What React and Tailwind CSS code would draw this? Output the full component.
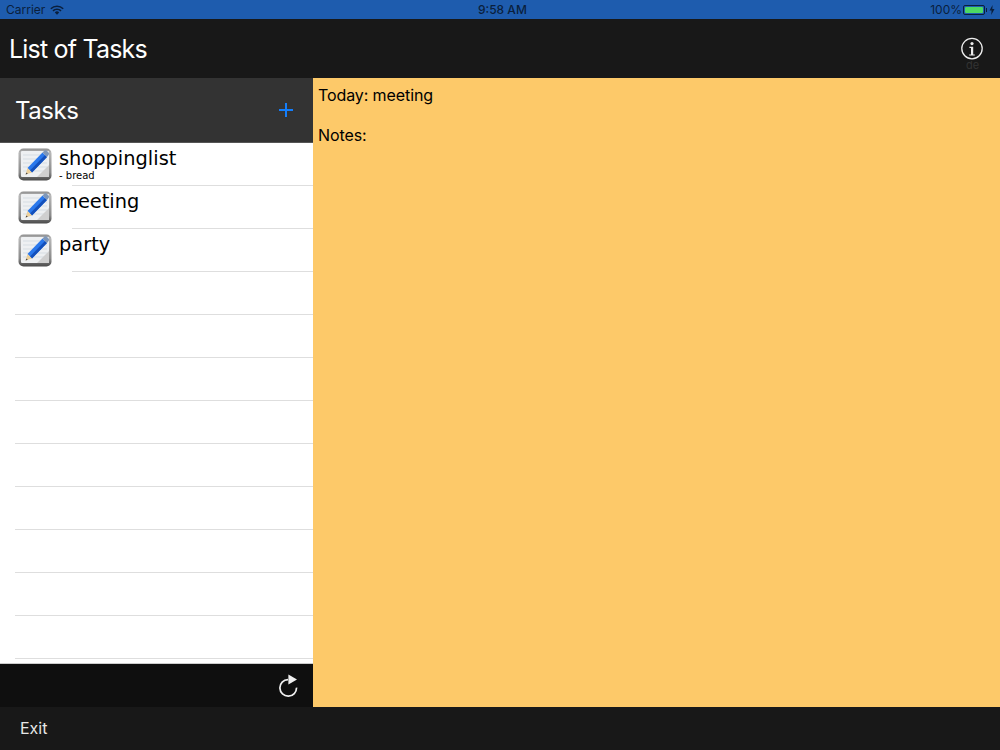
const tasks = [
  { name: "shoppinglist", note: "- bread" },
  { name: "meeting" },
  { name: "party" },
];

const emptyRows = 9;

/* NOTE ICON WITH PENCIL */
function NoteIcon() {
  return (
    <svg width="34" height="33" viewBox="0 0 34 33" className="block blur-[0.4px]">
      <defs>
        <linearGradient id="frame" x1="0" y1="0" x2="0" y2="1">
          <stop offset="0" stopColor="#8c8c8c" />
          <stop offset="0.12" stopColor="#b8b8b8" />
          <stop offset="0.75" stopColor="#8a8a8a" />
          <stop offset="1" stopColor="#4a4a4a" />
        </linearGradient>
      </defs>
      <rect x="0.5" y="0.5" width="33" height="32" rx="5" fill="url(#frame)" />
      <rect x="3" y="3" width="28" height="26" rx="1" fill="#eef0f2" />
      <path d="M5 7h24M5 11h24M5 15h24M5 19h24M5 23h24" stroke="#d6dde3" strokeWidth="1" />
      <path d="M19 29 L31 17 L31 28 Q31 29 30 29 Z" fill="#cfcfcf" />
      <path d="M9.5 20 L24.5 4.5 L29 9 L14 24.5 Z" fill="#2a78ec" />
      <path d="M12 22.5 L27 7 L29 9 L14 24.5 Z" fill="#1450bb" />
      <path d="M24.5 4.5 L26.5 2.5 Q27.5 1.6 28.8 2.8 L30.6 4.6 Q31.6 5.8 30.6 7 L29 9 Z" fill="#7f97b8" />
      <path d="M9.5 20 L14 24.5 L7.6 26.6 Z" fill="#ecd09c" />
      <path d="M8.4 24.4 L9.8 25.8 L7.6 26.6 Z" fill="#444444" />
    </svg>
  );
}

function TaskRow({ name, note }) {
  return (
    <div className="h-[43px] shrink-0 relative">
      <div className="flex h-full">
        <div className="w-[59px] shrink-0 pl-[18px] pt-[5px]">
          <NoteIcon />
        </div>
        <div className="pt-[3px] font-['DejaVu_Sans',sans-serif] text-black">
          <div className="text-[19.4px] leading-[25px]">{name}</div>
          {note && <div className="text-[10px] leading-[9px]">{note}</div>}
        </div>
      </div>
      <div className="absolute left-[72px] right-0 bottom-0 h-px bg-[#dedede]" />
    </div>
  );
}

function EmptyRow() {
  return (
    <div className="h-[43px] shrink-0 flex items-end pl-[15px]">
      <div className="w-full h-px bg-[#dedede]" />
    </div>
  );
}

export default function App() {
  return (
    <div className="w-[1000px] h-[750px] flex flex-col overflow-hidden bg-[#181818] font-['Inter',sans-serif]">

      {/* STATUS BAR */}
      <div className="h-[19px] shrink-0 bg-[#1e5cae] flex items-center justify-between pl-[6px] pr-[5px] text-[12px] text-[#0a1f3d] relative">
        <div className="flex items-center gap-[5px]">
          <span>Carrier</span>
          <svg width="14" height="10" viewBox="0 0 14 10">
            <path d="M0.8 3.8 A8.8 8.8 0 0 1 13.2 3.8" fill="none" stroke="#0a1f3d" strokeWidth="1.6" />
            <path d="M3 5.8 A5.8 5.8 0 0 1 11 5.8" fill="none" stroke="#0a1f3d" strokeWidth="1.6" />
            <path d="M4.8 7.4 A3.2 3.2 0 0 1 9.2 7.4 L7 9.8 Z" fill="#0a1f3d" />
          </svg>
        </div>
        <span className="absolute left-[478px] top-0 leading-[20px] font-medium">9:58 AM</span>
        <div className="flex items-center gap-[1px]">
          <span>100%</span>
          <div className="w-[22px] h-[10px] border border-[#0a1f3d] rounded-[2px] p-px">
            <div className="w-full h-full bg-[#4cd964] rounded-[1px]" />
          </div>
          <div className="w-px h-[4px] bg-[#0a1f3d]" />
          <svg width="6" height="10" viewBox="0 0 6 10" className="ml-[1px]">
            <path d="M3.6 0 L0.5 5.6 H2.6 L2.2 10 L5.5 4 H3.3 Z" fill="#0a1f3d" />
          </svg>
        </div>
      </div>

      {/* NAV BAR */}
      <div className="h-[59px] shrink-0 flex items-center justify-between pl-[9px] pr-[16px] bg-[#181818]">
        <h1 className="text-[25px] tracking-[-0.8px] text-white leading-none pt-[2px]">List of Tasks</h1>
        <div className="relative">
          <svg width="24" height="24" viewBox="0 0 24 24" className="block">
            <circle cx="12" cy="11.6" r="10.2" fill="none" stroke="#ececec" strokeWidth="1.3" />
            <circle cx="12" cy="6.6" r="1.6" fill="#ececec" />
            <path d="M9.4 9.8h3.8v7.6h1.6v1.1H9.2v-1.1h1.8v-6.5H9.4z" fill="#ececec" />
          </svg>
          <span className="absolute left-[6px] top-[21px] text-[11px] leading-[14px] text-[#333333]">de</span>
        </div>
      </div>

      <div className="flex-1 flex min-h-0">

        {/* LEFT COLUMN */}
        <div className="w-[313px] shrink-0 flex flex-col">
          <div className="h-[65px] shrink-0 bg-[#333333] flex items-center justify-between pl-[15px] pr-[20px] border-b border-[#555555]">
            <span className="text-[24px] tracking-[-0.45px] text-white pt-[2px]">Tasks</span>
            <svg width="14" height="14" viewBox="0 0 14 14">
              <path d="M7 0v14M0 7h14" stroke="#147efb" strokeWidth="2" />
            </svg>
          </div>
          <div className="flex-1 bg-white flex flex-col overflow-hidden border-b border-[#cccccc]">
            {tasks.map((t) => (
              <TaskRow key={t.name} name={t.name} note={t.note} />
            ))}
            {Array.from({ length: emptyRows }).map((_, i) => (
              <EmptyRow key={i} />
            ))}
          </div>
          <div className="h-[43px] shrink-0 bg-[#0f0f0f] flex items-center justify-end pr-[14px]">
            <svg width="20" height="24" viewBox="0 0 20 24" className="block">
              <path d="M9 5.6 A8.3 8.3 0 1 0 17.5 13.6" fill="none" stroke="#f0f0f0" strokeWidth="1.7" />
              <path d="M9.4 0.6 L18 5.4 L9.4 10.4 Z" fill="#f0f0f0" />
            </svg>
          </div>
        </div>

        {/* DETAIL PANE */}
        <div className="flex-1 bg-[#fdc969] pl-[5px] text-black text-[16px] leading-[20px] tracking-[-0.1px]">
          <p className="mt-[7px]">Today: meeting</p>
          <p className="mt-[20px]">Notes:</p>
        </div>
      </div>

      {/* FOOTER */}
      <div className="h-[43px] shrink-0 bg-[#181818] flex items-center pl-[20px] pb-[2px]">
        <span className="text-[16px] text-[#e6e6e6]">Exit</span>
      </div>
    </div>
  );
}
